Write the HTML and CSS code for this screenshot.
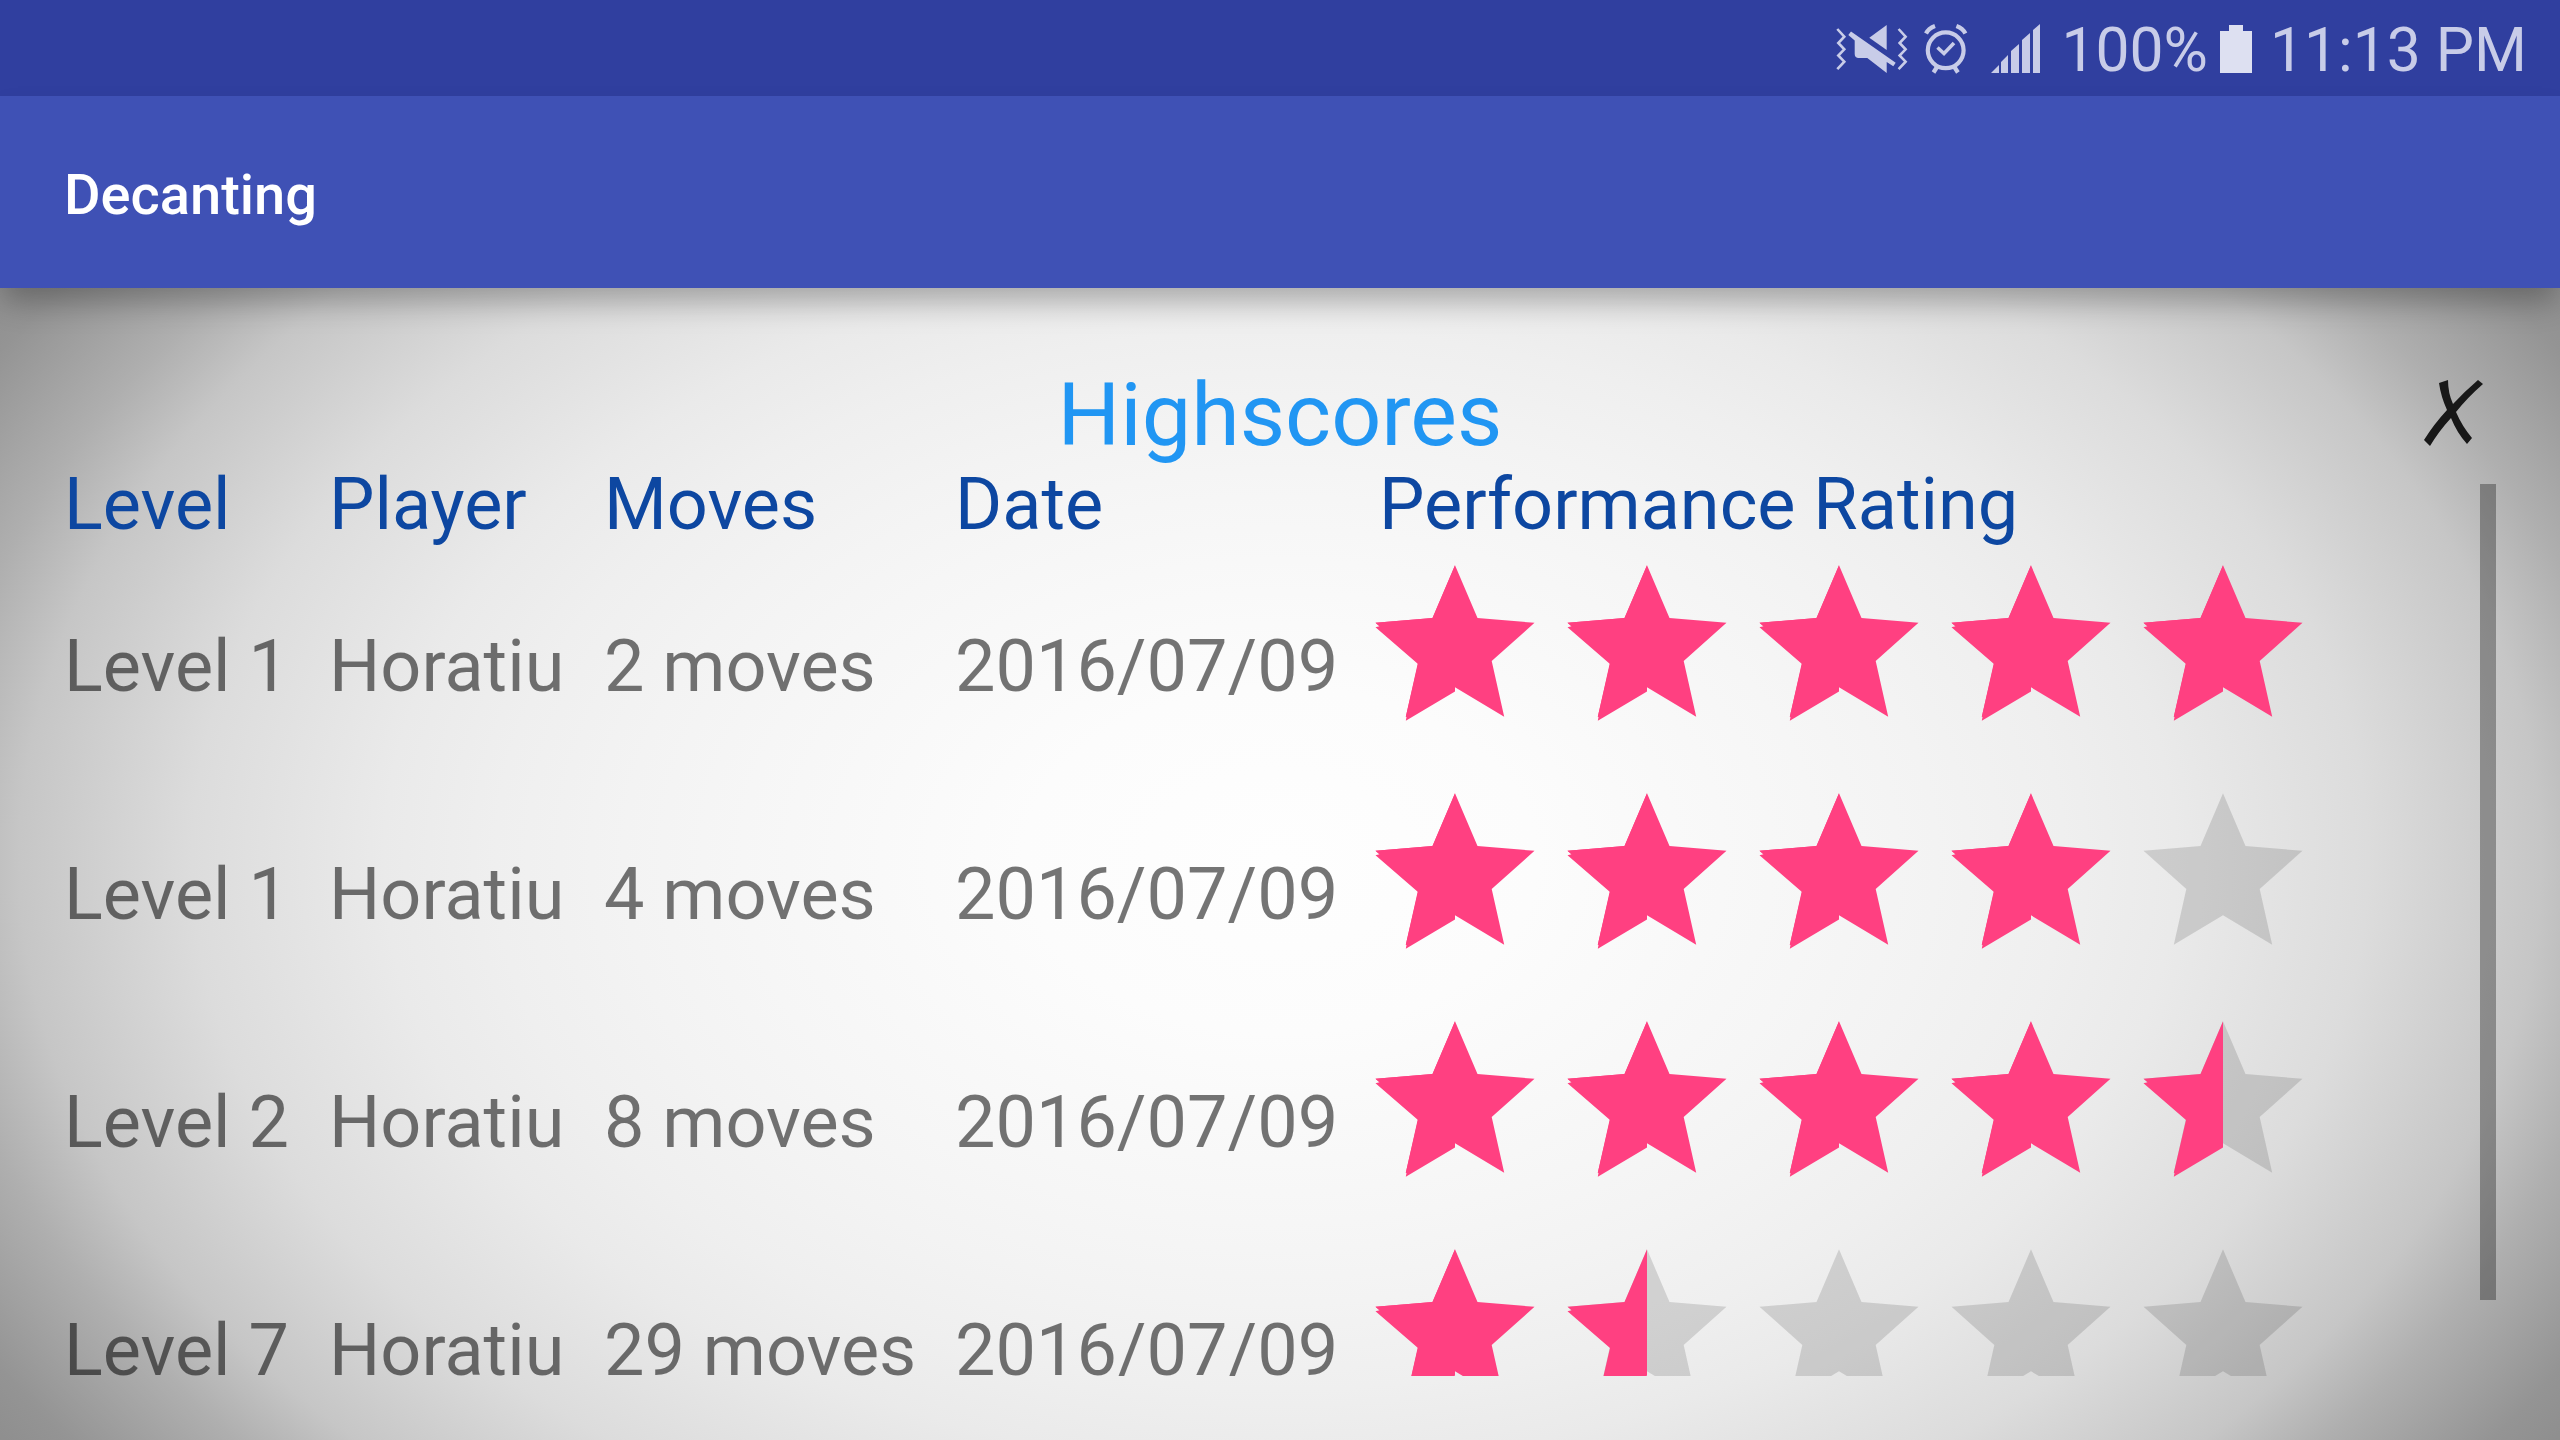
FILE: index.html
```
<!DOCTYPE html>
<html lang="en">
<head>
<meta charset="utf-8">
<title>Decanting</title>
<link rel="stylesheet" href="styles.css">
</head>
<body>
<svg class="defs" width="0" height="0" aria-hidden="true">
  <defs>
    <path id="star" d="M96 18.3 118.5 71 175.5 75.8 132.7 114 145.2 169.7 96 140.3 46.8 169.7 59.3 114 16.5 75.8 73.5 71z"/>
    <path id="star-left" d="M96 18.3V144.5L46.8 173.7 47.5 170 46.8 169.7 59 117 16.5 80.3 20.5 79.3 16.5 75.8 73.5 71z"/>
  </defs>
</svg>
<header class="status">
  <svg class="status-icons" width="170" height="96" viewBox="0 0 170 96">
    <g fill="none" stroke="#c8cce8" stroke-width="2.6">
      <path d="M16.3 29l7 7.7-6 6.3 6 6.3-6 6.2 6 6.2-7 7.5M77.6 29l7 7.7-6 6.3 6 6.3-6 6.2 6 6.2-7 7.5"/>
    </g>
    <g fill="#c8cce8">
      <path d="M65.7 25v25L48.3 37.7z"/>
      <path d="M30 31.5 74.7 62.7 72.3 66.3 65.7 62V73L46.3 58H37q-3.3-.5-3.3-4V40.5L27.3 35z"/>
    </g>
    <g fill="none" stroke="#c8cce8" stroke-width="4.2">
      <circle cx="124.7" cy="50.3" r="17.9"/>
      <path d="M116.5 47.5l6.5 6 10-10.5" stroke-width="3.6"/>
      <path d="M116 67l-3.5 5.5M133.4 67l3.5 5.5M105 33.5q2.3-5 9-7.5M144.4 33.5q-2.3-5-9-7.5"/>
    </g>
  </svg>
  <svg class="signal" width="50" height="96" viewBox="0 0 50 96" fill="#c8cce8"><path d="M0 73l8-8v8zM10 62l7-7v18h-7zM20 51l8-7v29h-8zM31 40l8-7v40h-8zM42 30l7-6v49h-7z"/></svg>
  <span class="battery-text">100%</span>
  <svg class="battery" width="32" height="96" viewBox="0 0 32 96" fill="#dde0f1"><path d="M0 31h9v-6h14v6h9v42H0z"/></svg>
  <span class="clock">11:13 PM</span>
</header>
<div class="appbar">Decanting</div>
<main class="panel">
  <div class="title-row">
    <h1>Highscores</h1>
    <svg class="close" width="64" height="72" viewBox="0 0 64 72" fill="#181818"><path d="M18 4l9-3q0 13 5 24Q43 13 57 1l5 4Q47 18 35 33q6 14 16 26l-5 6Q36 54 30 39 18 52 9 67l-6-6Q13 45 26 31 20 18 18 4z"/></svg>
  </div>
  <div class="scroller">
    <div class="row head"><span>Level</span><span>Player</span><span>Moves</span><span>Date</span><span>Performance Rating</span></div>
    <div class="row"><span>Level 1</span><span>Horatiu</span><span>2 moves</span><span>2016/07/09</span><svg class="stars" viewBox="0 0 960 228"><g class="on"><use href="#star"/><use href="#star-left"/><use href="#star" x="192"/><use href="#star-left" x="192"/><use href="#star" x="384"/><use href="#star-left" x="384"/><use href="#star" x="576"/><use href="#star-left" x="576"/><use href="#star" x="768"/><use href="#star-left" x="768"/></g></svg></div>
    <div class="row"><span>Level 1</span><span>Horatiu</span><span>4 moves</span><span>2016/07/09</span><svg class="stars" viewBox="0 0 960 228"><g class="on"><use href="#star"/><use href="#star-left"/><use href="#star" x="192"/><use href="#star-left" x="192"/><use href="#star" x="384"/><use href="#star-left" x="384"/><use href="#star" x="576"/><use href="#star-left" x="576"/></g><use class="off" href="#star" x="768"/></svg></div>
    <div class="row"><span>Level 2</span><span>Horatiu</span><span>8 moves</span><span>2016/07/09</span><svg class="stars" viewBox="0 0 960 228"><use class="off" href="#star" x="768"/><g class="on"><use href="#star"/><use href="#star-left"/><use href="#star" x="192"/><use href="#star-left" x="192"/><use href="#star" x="384"/><use href="#star-left" x="384"/><use href="#star" x="576"/><use href="#star-left" x="576"/><use href="#star-left" x="768"/></g></svg></div>
    <div class="row"><span>Level 7</span><span>Horatiu</span><span>29 moves</span><span>2016/07/09</span><svg class="stars" viewBox="0 0 960 228"><g class="off"><use href="#star" x="192"/><use href="#star" x="384"/><use href="#star" x="576"/><use href="#star" x="768"/></g><g class="on"><use href="#star"/><use href="#star-left"/><use href="#star-left" x="192"/></g></svg></div>
    <div class="thumb"></div>
  </div>
</main>
</body>
</html>
```
FILE: styles.css
```
* { box-sizing: border-box; }
body {
  margin: 0;
  width: 2560px;
  height: 1440px;
  overflow: hidden;
  display: flex;
  flex-direction: column;
  font-family: Roboto, "Liberation Sans", sans-serif;
}
.defs { position: absolute; }
.status {
  height: 96px;
  flex: none;
  display: flex;
  align-items: center;
  justify-content: flex-end;
  padding-right: 33px;
  background: #303f9f;
  color: #c8cce8;
  font-size: 60.6px;
  line-height: 96px;
  white-space: nowrap;
}
.battery-text { margin-left: 20px; padding-top: 5px; }
.battery { margin-left: 12px; }
.clock { margin-left: 18px; padding-top: 5px; }
.appbar {
  height: 192px;
  flex: none;
  position: relative;
  z-index: 1;
  padding-left: 64px;
  background: #3f51b5;
  color: #fff;
  font-size: 56px;
  font-weight: 500;
  line-height: 198px;
  box-shadow: 0 18px 28px -4px rgba(0, 0, 0, .28);
}
.panel {
  flex: 1;
  min-height: 0;
  padding: 64px;
  display: flex;
  flex-direction: column;
  background: radial-gradient(ellipse 1600px 1081px at 1280px 572px, #fefefe 0%, #fcfcfc 16%, #f6f6f6 33.6%, #f3f3f3 41%, #efefef 49%, #eaeaea 56%, #dcdcdc 68%, #c6c6c6 78.8%, #afafaf 84.4%, #949494 92.8%, #8f8f8f 96%, #8b8b8b 100%);
}
.title-row {
  height: 132px;
  flex: none;
  display: grid;
  grid-template-columns: 1fr auto 1fr;
}
h1 {
  grid-column: 2;
  margin: 0;
  color: #2196f3;
  font-size: 88px;
  font-weight: 400;
  line-height: 126px;
}
.close { justify-self: end; margin: 27px 11px 0 0; }
/* The header caps rise above the scroll area, so only its lower edge clips. */
.scroller {
  flex: 1;
  min-height: 0;
  position: relative;
  clip-path: inset(-24px 0 0 0);
}
.row {
  display: grid;
  grid-template-columns: 265px 275px 351px 404px 960px;
  height: 228px;
  font-size: 72px;
  line-height: 84px;
  color: rgba(0, 0, 0, .54);
  white-space: nowrap;
}
.row > span { padding-top: 78px; }
.head { height: 63px; color: #0d47a1; }
.head > span { padding-top: 0; margin-top: -21px; }
.head > span:last-child { padding-left: 20px; }
.stars { width: 960px; height: 228px; }
.on { fill: #ff4081; }
.off { fill: rgba(0, 0, 0, .13); }
.thumb {
  position: absolute;
  top: 0;
  right: 0;
  width: 16px;
  height: 816px;
  background: rgba(0, 0, 0, .31);
}
```
